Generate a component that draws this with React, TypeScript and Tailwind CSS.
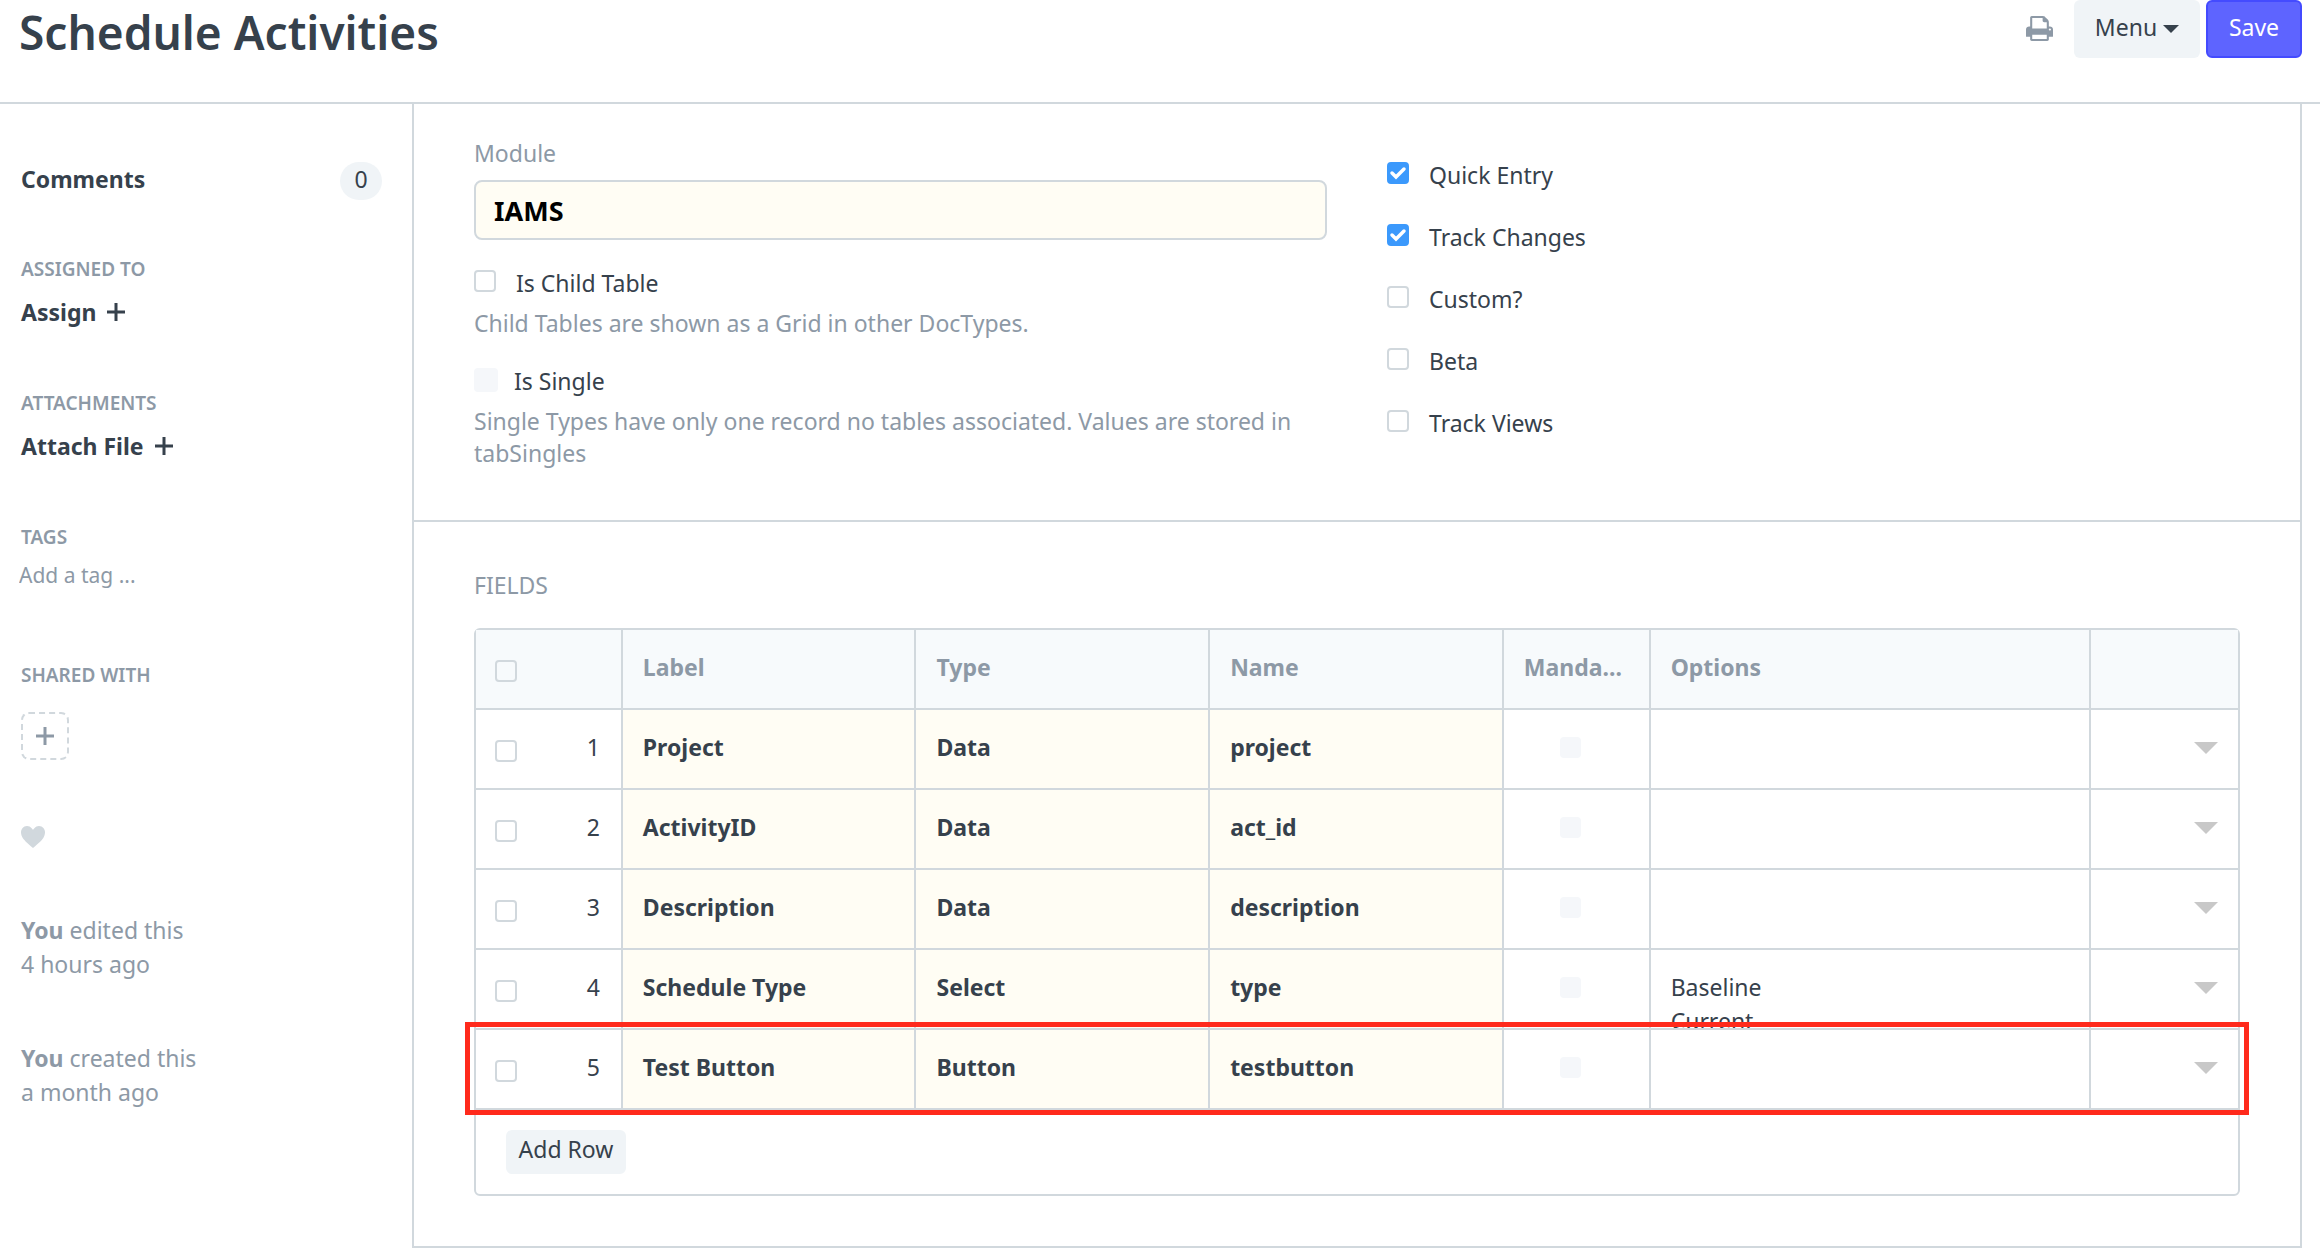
import { useId, type ReactNode } from "react";

type Field = {
  label: string;
  type: string;
  name: string;
  options?: string[];
};

const FIELDS: Field[] = [
  { label: "Project", type: "Data", name: "project" },
  { label: "ActivityID", type: "Data", name: "act_id" },
  { label: "Description", type: "Data", name: "description" },
  { label: "Schedule Type", type: "Select", name: "type", options: ["Baseline", "Current"] },
  { label: "Test Button", type: "Button", name: "testbutton" },
];

const FLAGS = [
  { label: "Quick Entry", on: true },
  { label: "Track Changes", on: true },
  { label: "Custom?", on: false },
  { label: "Beta", on: false },
  { label: "Track Views", on: false },
];

function PlusIcon() {
  return (
    <svg viewBox="0 0 20 20" className="size-5 shrink-0" fill="none" stroke="currentColor" strokeWidth="3" aria-hidden="true">
      <path d="M10 1v18M1 10h18" />
    </svg>
  );
}

function PrintIcon() {
  return (
    <svg viewBox="0 128 1664 1536" className="h-[25px] w-[27px]" fill="currentColor" aria-hidden="true">
      <path d="M384 1536h896v-256h-896v256zm0-640h896v-384h-160q-40 0-68-28t-28-68v-160h-640v640zm1152 64q0-26-19-45t-45-19-45 19-19 45 19 45 45 19 45-19 19-45zm128 0v416q0 13-9.5 22.5t-22.5 9.5h-224v160q0 40-28 68t-68 28h-960q-40 0-68-28t-28-68v-160h-224q-13 0-22.5-9.5t-9.5-22.5v-416q0-79 56.5-135.5t135.5-56.5h64v-544q0-40 28-68t68-28h672q40 0 88 20t76 48l152 152q28 28 48 76t20 88v256h64q79 0 135.5 56.5t56.5 135.5z" />
    </svg>
  );
}

function HeartIcon() {
  return (
    <svg viewBox="0 2 12 11" className="h-[22px] w-6" fill="currentColor" aria-hidden="true">
      <path d="M11.2 3c-.52-.63-1.25-.95-2.2-1-.97 0-1.69.42-2.2 1-.51.58-.78.92-.8 1-.02-.08-.28-.42-.8-1-.52-.58-1.17-1-2.2-1-.95.05-1.69.38-2.2 1-.52.61-.78 1.28-.8 2 0 .52.09 1.52.67 2.67C1.25 8.82 3.01 10.61 6 13c2.98-2.39 4.77-4.17 5.34-5.33C11.91 6.51 12 5.5 12 5c-.02-.72-.28-1.39-.8-2z" />
    </svg>
  );
}

function CheckBox({ id, label, defaultChecked }: { id?: string; label?: string; defaultChecked?: boolean }) {
  return (
    <span className="relative block size-[22px] shrink-0">
      <input
        id={id}
        type="checkbox"
        aria-label={label}
        defaultChecked={defaultChecked}
        className="peer block size-[22px] appearance-none rounded-[4px] border-2 border-[#d1d8dd] checked:border-[#3b99fc] checked:bg-[#3b99fc]"
      />
      <svg
        viewBox="0 0 22 22"
        className="pointer-events-none absolute inset-0 hidden size-[22px] peer-checked:block"
        fill="none"
        stroke="white"
        strokeWidth="3.5"
        strokeLinecap="round"
        aria-hidden="true"
      >
        <path d="M5 11l4 4L17 7" />
      </svg>
    </span>
  );
}

function LabelledCheck({ label, defaultChecked }: { label: string; defaultChecked?: boolean }) {
  const id = useId();
  return (
    <label htmlFor={id} className="flex w-fit gap-5">
      <span className="pt-[3px]"><CheckBox id={id} defaultChecked={defaultChecked} /></span>
      {label}
    </label>
  );
}

function SideHeading({ children }: { children: ReactNode }) {
  return <h2 className="text-[19px] leading-6 font-semibold text-[#8d99a6] uppercase">{children}</h2>;
}

function Sidebar() {
  return (
    <aside className="w-[412px] shrink-0 pt-[58px] pl-[21px] text-[23px] leading-[34px] text-[#8d99a6]">
      <div className="flex h-[38px] items-start justify-between pr-[30px] text-[#36414c]">
        <a href="#comments" className="font-bold">Comments</a>
        <span className="h-[38px] w-[42px] rounded-full bg-[#f0f4f7] text-center">0</span>
      </div>

      <div className="mt-[57px]">
        <SideHeading>Assigned To</SideHeading>
        <button type="button" className="mt-[14px] flex items-center gap-[10px] font-bold text-[#36414c]">
          Assign <PlusIcon />
        </button>
      </div>

      <div className="mt-[62px]">
        <SideHeading>Attachments</SideHeading>
        <button type="button" className="mt-[14px] flex items-center gap-[10px] font-bold text-[#36414c]">
          Attach File <PlusIcon />
        </button>
      </div>

      <div className="mt-[62px]">
        <SideHeading>Tags</SideHeading>
        <input
          type="text"
          aria-label="Add a tag"
          placeholder="Add a tag ..."
          className="-ml-[2px] mt-[9px] block h-[34px] w-[300px] text-[21px] placeholder:text-[#8d99a6] focus:outline-none"
        />
      </div>

      <div className="mt-[71px]">
        <SideHeading>Shared With</SideHeading>
        <button
          type="button"
          aria-label="Share"
          className="mt-[25px] flex size-12 items-center justify-center rounded-[8px] border-2 border-dashed border-[#d1d8dd]"
        >
          <PlusIcon />
        </button>
      </div>

      <button type="button" aria-label="Like" className="mt-[66px] block text-[#d1d8dd]">
        <HeartIcon />
      </button>

      <p className="mt-[65px]">
        <b>You</b> edited this
        <br />4 hours ago
      </p>
      <p className="mt-[60px]">
        <b>You</b> created this
        <br />a month ago
      </p>
    </aside>
  );
}

function Header() {
  return (
    <header className="flex h-[104px] items-start justify-between border-b-2 border-[#d1d8dd] pr-[18px] pl-[19px]">
      <h1 className="text-[46px] leading-[64px] font-semibold">Schedule Activities</h1>
      <div className="flex items-start text-[23px]">
        <button type="button" aria-label="Print" className="mr-[21px] pt-4 text-[#8d99a6]">
          <PrintIcon />
        </button>
        <button type="button" className="flex h-[58px] w-[126px] items-center justify-center gap-[6px] rounded-[6px] bg-[#f0f4f7] pb-1">
          Menu
          <svg viewBox="0 0 16 8" className="mt-1 h-2 w-4" fill="currentColor" aria-hidden="true">
            <path d="M0 0h16L8 8z" />
          </svg>
        </button>
        <button
          type="button"
          className="ml-[6px] h-[58px] w-24 rounded-[6px] border-2 border-[#444bff] bg-[#5e64ff] pb-1 text-white"
        >
          Save
        </button>
      </div>
    </header>
  );
}

function Settings() {
  return (
    <section className="grid grid-cols-2 gap-[60px] border-b-2 border-[#d1d8dd] px-[60px] pb-[51px] text-[23px] leading-8">
      <div className="pt-[33px]">
        <label htmlFor="module" className="block text-[#8d99a6]">Module</label>
        <input
          id="module"
          type="text"
          defaultValue="IAMS"
          className="mt-[11px] mb-[27px] block h-[60px] w-full rounded-[8px] border-2 border-[#d1d8dd] bg-[#fffdf4] px-[18px] text-[27px] font-bold text-black focus:outline-none"
        />
        <LabelledCheck label="Is Child Table" />
        <p className="mt-2 text-[#8d99a6]">Child Tables are shown as a Grid in other DocTypes.</p>
        <label htmlFor="is-single" className="mt-[26px] flex w-fit gap-4">
          <input id="is-single" type="checkbox" disabled className="mt-[3px] block size-6 appearance-none rounded-[4px] bg-[#f5f7fa]" />
          Is Single
        </label>
        <p className="mt-2 text-[#8d99a6]">
          Single Types have only one record no tables associated. Values are stored in tabSingles
        </p>
      </div>
      <div className="flex flex-col gap-[30px] pt-[55px]">
        {FLAGS.map((flag) => <LabelledCheck key={flag.label} label={flag.label} defaultChecked={flag.on} />)}
      </div>
    </section>
  );
}

const CELL = "h-20 border-b-2 border-r-2 border-[#d1d8dd] p-0 align-top last:border-r-0";

function FieldRow({ field, index }: { field: Field; index: number }) {
  return (
    <tr>
      <td className={CELL}>
        <div className="flex justify-between pr-[21px] pl-[19px]">
          <span className="pt-[30px]"><CheckBox label={`Select row ${index}`} /></span>
          <span className="pt-5">{index}</span>
        </div>
      </td>
      <td className={`${CELL} bg-[#fffdf4] font-bold`}><div className="px-5 pt-5">{field.label}</div></td>
      <td className={`${CELL} bg-[#fffdf4] font-bold`}><div className="px-5 pt-5">{field.type}</div></td>
      <td className={`${CELL} bg-[#fffdf4] font-bold`}><div className="px-5 pt-5">{field.name}</div></td>
      <td className={CELL}>
        <input
          type="checkbox"
          disabled
          aria-label={`${field.label} mandatory`}
          className="mt-[27px] ml-14 block size-[21px] appearance-none rounded-[4px] bg-[#f5f7fa]"
        />
      </td>
      <td className={CELL}>
        <div className="h-[78px] overflow-hidden px-5 pt-5">
          {field.options?.map((option) => <div key={option}>{option}</div>)}
        </div>
      </td>
      <td className={CELL}>
        <button type="button" aria-label={`Edit row ${index}`} className="mr-5 ml-auto block pt-8 text-[#c8c8c8]">
          <svg viewBox="0 0 24 12" className="h-3 w-6" fill="currentColor" aria-hidden="true">
            <path d="M0 0h24L12 12z" />
          </svg>
        </button>
      </td>
    </tr>
  );
}

function FieldsGrid() {
  return (
    <section className="px-[60px] pt-[47px] pb-[50px] text-[23px] leading-[34px]">
      <h2 className="leading-8 text-[#8d99a6] uppercase">Fields</h2>
      <div className="mt-[27px] rounded-[6px] border-2 border-[#d1d8dd]">
        <div className="relative">
          <table className="w-full table-fixed border-separate border-spacing-0 text-left">
            <colgroup>
              <col className="w-1/12" />
              <col className="w-1/6" />
              <col className="w-1/6" />
              <col className="w-1/6" />
              <col className="w-1/12" />
              <col className="w-1/4" />
              <col className="w-1/12" />
            </colgroup>
            <thead className="bg-[#f7fafc] text-[#8d99a6]">
              <tr>
                <th className={CELL}>
                  <div className="pt-[30px] pl-[19px]"><CheckBox label="Select all rows" /></div>
                </th>
                {["Label", "Type", "Name", "Manda...", "Options"].map((title) => (
                  <th key={title} scope="col" className={CELL}><div className="px-5 pt-5">{title}</div></th>
                ))}
                <th className={CELL} aria-label="Actions" />
              </tr>
            </thead>
            <tbody>
              {FIELDS.map((field, i) => <FieldRow key={field.name} field={field} index={i + 1} />)}
            </tbody>
          </table>
          {/* Frame around the last row, which holds the new button field */}
          <div className="pointer-events-none absolute -inset-x-[11px] -bottom-[5px] h-[93px] border-5 border-[#ff2a1c]" />
        </div>
        <div className="px-[30px] py-5">
          <button type="button" className="h-11 w-[120px] rounded-[6px] bg-[#f0f4f7] pb-[6px]">Add Row</button>
        </div>
      </div>
    </section>
  );
}

export default function App() {
  return (
    <div className="min-h-screen bg-white font-['Noto_Sans','Open_Sans',sans-serif] text-[#36414c]">
      <Header />
      <div className="flex items-start">
        <Sidebar />
        <main className="mr-[18px] min-w-0 flex-1 border-x-2 border-b-2 border-[#d1d8dd]">
          <Settings />
          <FieldsGrid />
        </main>
      </div>
    </div>
  );
}
